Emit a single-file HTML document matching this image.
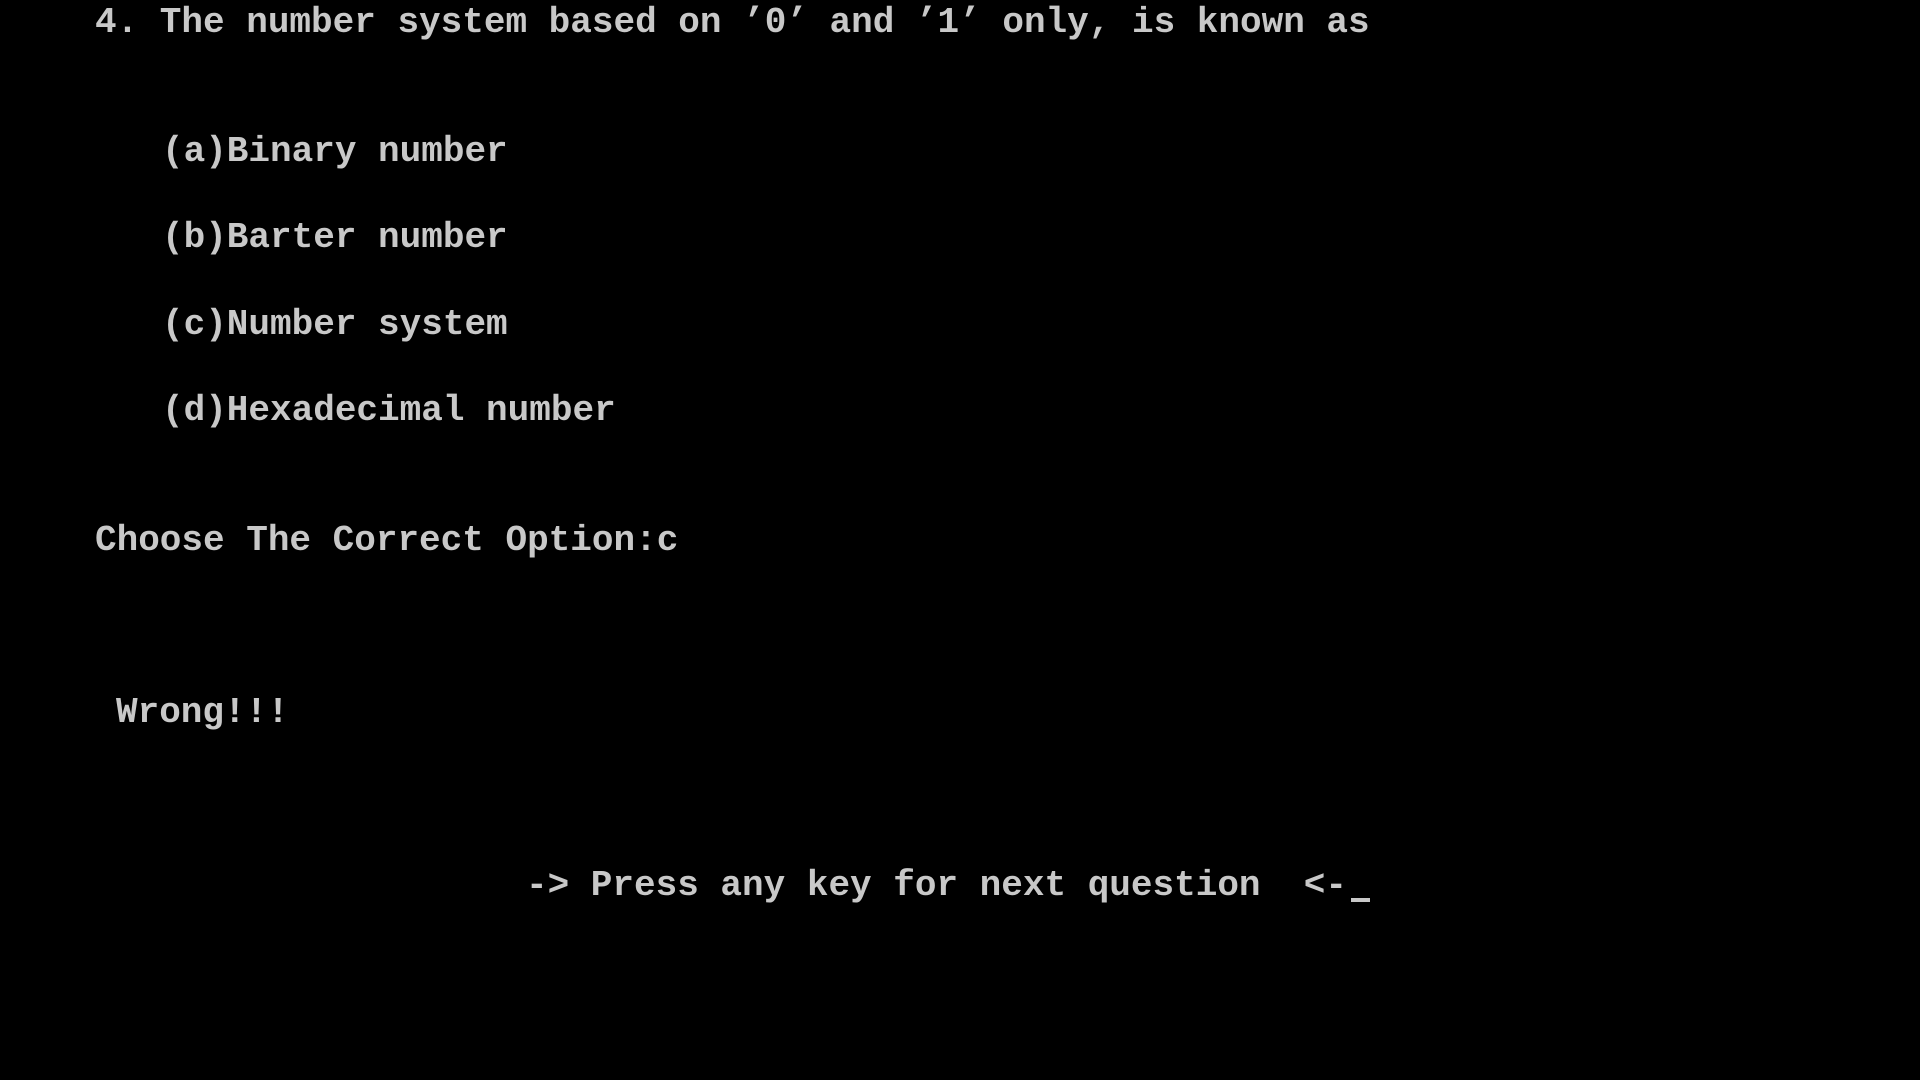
<!DOCTYPE html>
<html><head><meta charset="utf-8"><style>
html,body{margin:0;padding:0;background:#000;width:1920px;height:1080px;overflow:hidden}
.l{position:absolute;font-family:"Liberation Mono","DejaVu Sans Mono",monospace;font-size:36px;line-height:43px;color:#c8c8c8;white-space:pre;font-weight:bold;letter-spacing:0px}
</style></head><body>
<div class="l" style="left:95px;top:1px">4. The number system based on ’0’ and ’1’ only, is known as</div>
<div class="l" style="left:162px;top:130px">(a)Binary number</div>
<div class="l" style="left:162px;top:216px">(b)Barter number</div>
<div class="l" style="left:162px;top:303px">(c)Number system</div>
<div class="l" style="left:162px;top:389px">(d)Hexadecimal number</div>
<div class="l" style="left:95px;top:519px">Choose The Correct Option:c</div>
<div class="l" style="left:116px;top:691px">Wrong!!!</div>
<div class="l" style="left:526px;top:864px">-&gt; Press any key for next question  &lt;-</div>
<div style="position:absolute;left:1351px;top:898px;width:19px;height:4px;background:#c8c8c8"></div>
</body></html>
